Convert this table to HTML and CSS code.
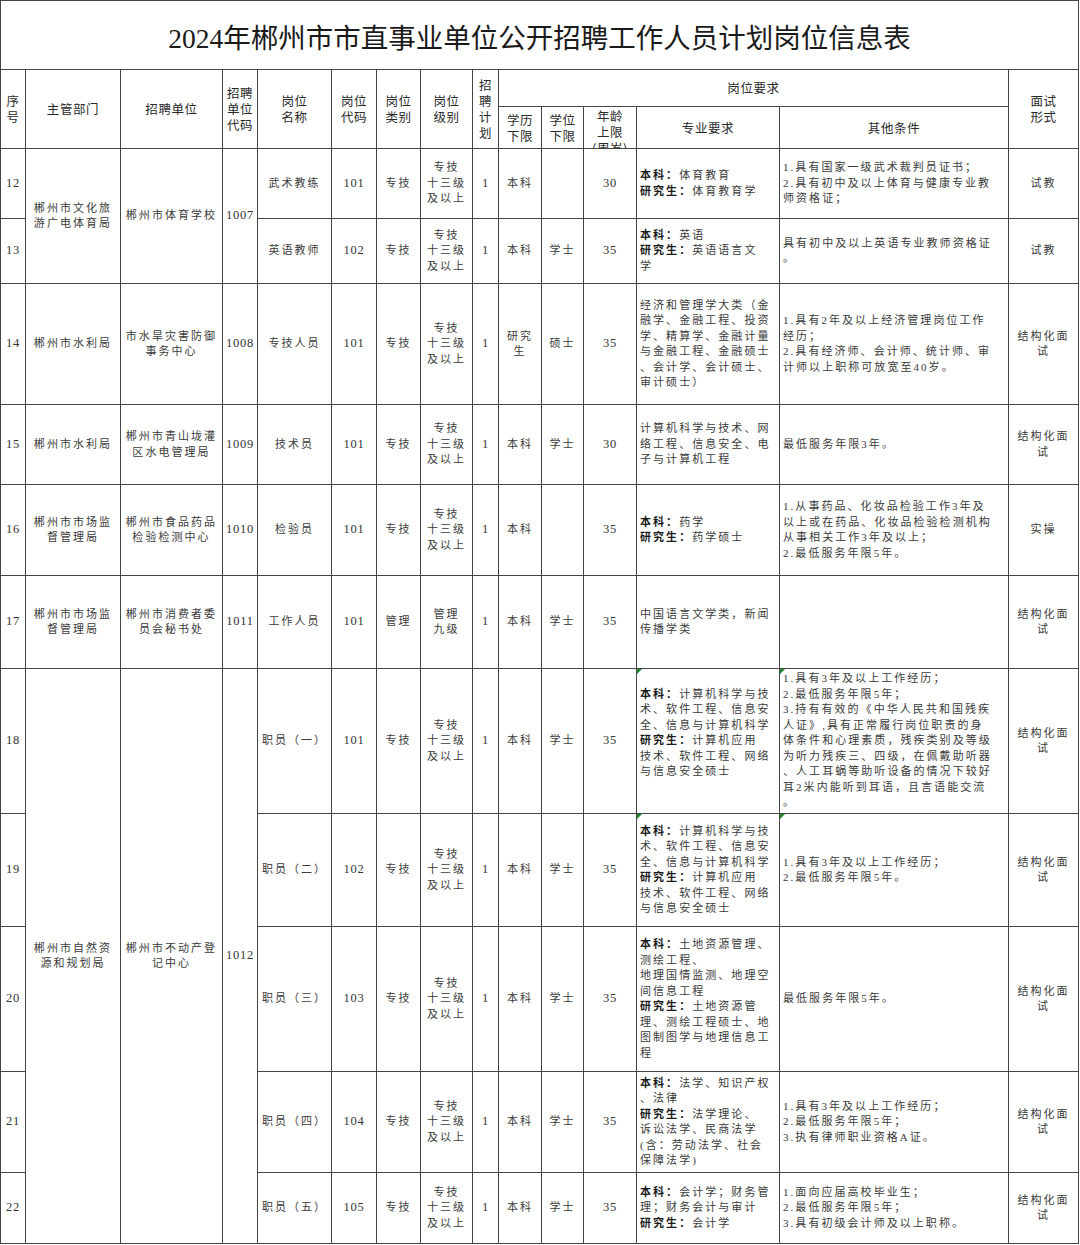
FILE: index.html
```html
<!DOCTYPE html>
<html lang="zh-CN">
<head>
<meta charset="utf-8">
<title>2024年郴州市市直事业单位公开招聘工作人员计划岗位信息表</title>
<link rel="stylesheet" href="styles.css">
</head>
<body>
<table class="sheet">
  <colgroup>
    <col class="c-no"><col class="c-dept"><col class="c-unit"><col class="c-ucode">
    <col class="c-post"><col class="c-pcode"><col class="c-type"><col class="c-level">
    <col class="c-plan"><col class="c-edu"><col class="c-deg"><col class="c-age">
    <col class="c-major"><col class="c-other"><col class="c-exam">
  </colgroup>
  <tr class="h-title">
    <td class="title" colspan="15">2024年郴州市市直事业单位公开招聘工作人员计划岗位信息表</td>
  </tr>
  <tr class="h-a">
    <th rowspan="2">序<br>号</th>
    <th rowspan="2">主管部门</th>
    <th rowspan="2">招聘单位</th>
    <th rowspan="2">招聘<br>单位<br>代码</th>
    <th rowspan="2">岗位<br>名称</th>
    <th rowspan="2">岗位<br>代码</th>
    <th rowspan="2">岗位<br>类别</th>
    <th rowspan="2">岗位<br>级别</th>
    <th rowspan="2">招<br>聘<br>计<br>划</th>
    <th colspan="5">岗位要求</th>
    <th rowspan="2">面试<br>形式</th>
  </tr>
  <tr class="h-b">
    <th>学历<br>下限</th>
    <th>学位<br>下限</th>
    <th class="top"><div class="clip">年龄<br>上限<br>(周岁)</div></th>
    <th>专业要求</th>
    <th>其他条件</th>
  </tr>

  <tr class="r12">
    <td class="n">12</td>
    <td rowspan="2">郴州市文化旅<br>游广电体育局</td>
    <td rowspan="2">郴州市体育学校</td>
    <td rowspan="2" class="n">1007</td>
    <td>武术教练</td>
    <td class="n">101</td>
    <td>专技</td>
    <td>专技<br>十三级<br>及以上</td>
    <td class="n">1</td>
    <td>本科</td>
    <td></td>
    <td class="n">30</td>
    <td class="l"><b>本科：</b>体育教育<br><b>研究生：</b>体育教育学</td>
    <td class="l">1.具有国家一级武术裁判员证书；<br>2.具有初中及以上体育与健康专业教<br>师资格证；</td>
    <td>试教</td>
  </tr>
  <tr class="r13">
    <td class="n">13</td>
    <td>英语教师</td>
    <td class="n">102</td>
    <td>专技</td>
    <td>专技<br>十三级<br>及以上</td>
    <td class="n">1</td>
    <td>本科</td>
    <td>学士</td>
    <td class="n">35</td>
    <td class="l"><b>本科：</b>英语<br><b>研究生：</b>英语语言文<br>学</td>
    <td class="l">具有初中及以上英语专业教师资格证<br>。</td>
    <td>试教</td>
  </tr>
  <tr class="r14">
    <td class="n">14</td>
    <td>郴州市水利局</td>
    <td>市水旱灾害防御<br>事务中心</td>
    <td class="n">1008</td>
    <td>专技人员</td>
    <td class="n">101</td>
    <td>专技</td>
    <td>专技<br>十三级<br>及以上</td>
    <td class="n">1</td>
    <td>研究<br>生</td>
    <td>硕士</td>
    <td class="n">35</td>
    <td class="l">经济和管理学大类（金<br>融学、金融工程、投资<br>学、精算学、金融计量<br>与金融工程、金融硕士<br>、会计学、会计硕士、<br>审计硕士）</td>
    <td class="l">1.具有2年及以上经济管理岗位工作<br>经历；<br>2.具有经济师、会计师、统计师、审<br>计师以上职称可放宽至40岁。</td>
    <td>结构化面<br>试</td>
  </tr>
  <tr class="r15">
    <td class="n">15</td>
    <td>郴州市水利局</td>
    <td>郴州市青山垅灌<br>区水电管理局</td>
    <td class="n">1009</td>
    <td>技术员</td>
    <td class="n">101</td>
    <td>专技</td>
    <td>专技<br>十三级<br>及以上</td>
    <td class="n">1</td>
    <td>本科</td>
    <td>学士</td>
    <td class="n">30</td>
    <td class="l">计算机科学与技术、网<br>络工程、信息安全、电<br>子与计算机工程</td>
    <td class="l">最低服务年限3年。</td>
    <td>结构化面<br>试</td>
  </tr>
  <tr class="r16">
    <td class="n">16</td>
    <td>郴州市市场监<br>督管理局</td>
    <td>郴州市食品药品<br>检验检测中心</td>
    <td class="n">1010</td>
    <td>检验员</td>
    <td class="n">101</td>
    <td>专技</td>
    <td>专技<br>十三级<br>及以上</td>
    <td class="n">1</td>
    <td>本科</td>
    <td></td>
    <td class="n">35</td>
    <td class="l"><b>本科：</b>药学<br><b>研究生：</b>药学硕士</td>
    <td class="l">1.从事药品、化妆品检验工作3年及<br>以上或在药品、化妆品检验检测机构<br>从事相关工作3年及以上；<br>2.最低服务年限5年。</td>
    <td>实操</td>
  </tr>
  <tr class="r17">
    <td class="n">17</td>
    <td>郴州市市场监<br>督管理局</td>
    <td>郴州市消费者委<br>员会秘书处</td>
    <td class="n">1011</td>
    <td>工作人员</td>
    <td class="n">101</td>
    <td>管理</td>
    <td>管理<br>九级</td>
    <td class="n">1</td>
    <td>本科</td>
    <td>学士</td>
    <td class="n">35</td>
    <td class="l">中国语言文学类，新闻<br>传播学类</td>
    <td class="l"></td>
    <td>结构化面<br>试</td>
  </tr>
  <tr class="r18">
    <td class="n">18</td>
    <td rowspan="5">郴州市自然资<br>源和规划局</td>
    <td rowspan="5">郴州市不动产登<br>记中心</td>
    <td rowspan="5" class="n">1012</td>
    <td>职员（一）</td>
    <td class="n">101</td>
    <td>专技</td>
    <td>专技<br>十三级<br>及以上</td>
    <td class="n">1</td>
    <td>本科</td>
    <td>学士</td>
    <td class="n">35</td>
    <td class="l flag"><span class="mark"></span><b>本科：</b>计算机科学与技<br>术、软件工程、信息安<br>全、信息与计算机科学<br><b>研究生：</b>计算机应用<br>技术、软件工程、网络<br>与信息安全硕士<br>&nbsp;</td>
    <td class="l flag"><span class="mark"></span>1.具有3年及以上工作经历；<br>2.最低服务年限5年；<br>3.持有有效的《中华人民共和国残疾<br>人证》,具有正常履行岗位职责的身<br>体条件和心理素质，残疾类别及等级<br>为听力残疾三、四级，在佩戴助听器<br>、人工耳蜗等助听设备的情况下较好<br>耳2米内能听到耳语，且言语能交流<br>。</td>
    <td>结构化面<br>试</td>
  </tr>
  <tr class="r19">
    <td class="n">19</td>
    <td>职员（二）</td>
    <td class="n">102</td>
    <td>专技</td>
    <td>专技<br>十三级<br>及以上</td>
    <td class="n">1</td>
    <td>本科</td>
    <td>学士</td>
    <td class="n">35</td>
    <td class="l flag"><span class="mark"></span><b>本科：</b>计算机科学与技<br>术、软件工程、信息安<br>全、信息与计算机科学<br><b>研究生：</b>计算机应用<br>技术、软件工程、网络<br>与信息安全硕士</td>
    <td class="l flag"><span class="mark"></span>1.具有3年及以上工作经历；<br>2.最低服务年限5年。</td>
    <td>结构化面<br>试</td>
  </tr>
  <tr class="r20">
    <td class="n">20</td>
    <td>职员（三）</td>
    <td class="n">103</td>
    <td>专技</td>
    <td>专技<br>十三级<br>及以上</td>
    <td class="n">1</td>
    <td>本科</td>
    <td>学士</td>
    <td class="n">35</td>
    <td class="l"><b>本科：</b>土地资源管理、<br>测绘工程、<br>地理国情监测、地理空<br>间信息工程<br><b>研究生：</b>土地资源管<br>理、测绘工程硕士、地<br>图制图学与地理信息工<br>程</td>
    <td class="l">最低服务年限5年。</td>
    <td>结构化面<br>试</td>
  </tr>
  <tr class="r21">
    <td class="n">21</td>
    <td>职员（四）</td>
    <td class="n">104</td>
    <td>专技</td>
    <td>专技<br>十三级<br>及以上</td>
    <td class="n">1</td>
    <td>本科</td>
    <td>学士</td>
    <td class="n">35</td>
    <td class="l"><b>本科：</b>法学、知识产权<br>、法律<br><b>研究生：</b>法学理论、<br>诉讼法学、民商法学<br>(含：劳动法学、社会<br>保障法学)</td>
    <td class="l">1.具有3年及以上工作经历；<br>2.最低服务年限5年；<br>3.执有律师职业资格A证。</td>
    <td>结构化面<br>试</td>
  </tr>
  <tr class="r22">
    <td class="n">22</td>
    <td>职员（五）</td>
    <td class="n">105</td>
    <td>专技</td>
    <td>专技<br>十三级<br>及以上</td>
    <td class="n">1</td>
    <td>本科</td>
    <td>学士</td>
    <td class="n">35</td>
    <td class="l"><b>本科：</b>会计学；财务管<br>理；财务会计与审计<br><b>研究生：</b>会计学</td>
    <td class="l">1.面向应届高校毕业生；<br>2.最低服务年限5年；<br>3.具有初级会计师及以上职称。</td>
    <td>结构化面<br>试</td>
  </tr>
</table>
</body>
</html>
```

FILE: styles.css
```css
html, body {
  margin: 0;
  padding: 0;
  background: #ffffff;
}

.sheet {
  border-collapse: collapse;
  table-layout: fixed;
  width: 1079px;
  font-family: "Liberation Serif", "Noto Sans CJK SC", serif;
  font-size: 11px;
  letter-spacing: 2.05px;
  color: #3a3a3a;
}

.c-no { width: 25px; }
.c-dept { width: 95px; }
.c-unit { width: 102px; }
.c-ucode { width: 35px; }
.c-post { width: 74px; }
.c-pcode { width: 45px; }
.c-type { width: 44px; }
.c-level { width: 52px; }
.c-plan { width: 26px; }
.c-edu { width: 43px; }
.c-deg { width: 42px; }
.c-age { width: 53px; }
.c-major { width: 143px; }
.c-other { width: 229px; }
.c-exam { width: 70px; }

.sheet td,
.sheet th {
  border: 1px solid #454545;
  padding: 0 1px;
  text-align: center;
  vertical-align: middle;
  line-height: 15.5px;
  white-space: nowrap;
}

.sheet th {
  font-family: "Noto Sans CJK SC", sans-serif;
  font-size: 12.5px;
  font-weight: 400;
  letter-spacing: 0.6px;
  line-height: 16px;
  color: #2a2a2a;
}

.sheet td.title {
  font-family: "Liberation Serif", "Noto Sans CJK SC", serif;
  font-size: 27.5px;
  letter-spacing: 0;
  color: #1a1a1a;
  padding: 7px 0 0;
}

.sheet td.n {
  font-size: 12.5px;
  letter-spacing: 0.8px;
  color: #333333;
}

.sheet th.top {
  vertical-align: top;
  padding: 0;
}

.clip {
  height: 41px;
  padding-top: 1px;
  box-sizing: border-box;
  overflow: hidden;
}

.sheet td.l {
  text-align: left;
  padding-left: 3px;
  padding-right: 0;
}

.sheet b {
  font-weight: 700;
  color: #1a1a1a;
}

.flag {
  position: relative;
}

.mark {
  position: absolute;
  top: 0;
  left: 0;
  width: 0;
  height: 0;
  border-top: 5px solid #1f8a2a;
  border-right: 5px solid transparent;
}

.h-title { height: 69px; }
.h-a { height: 37px; }
.h-b { height: 42px; }
.r12 { height: 70px; }
.r13 { height: 65px; }
.r14 { height: 121px; }
.r15 { height: 80px; }
.r16 { height: 91px; }
.r17 { height: 93px; }
.r18 { height: 145px; }
.r19 { height: 113px; }
.r20 { height: 145px; }
.r21 { height: 101px; }
.r22 { height: 71px; }
```
